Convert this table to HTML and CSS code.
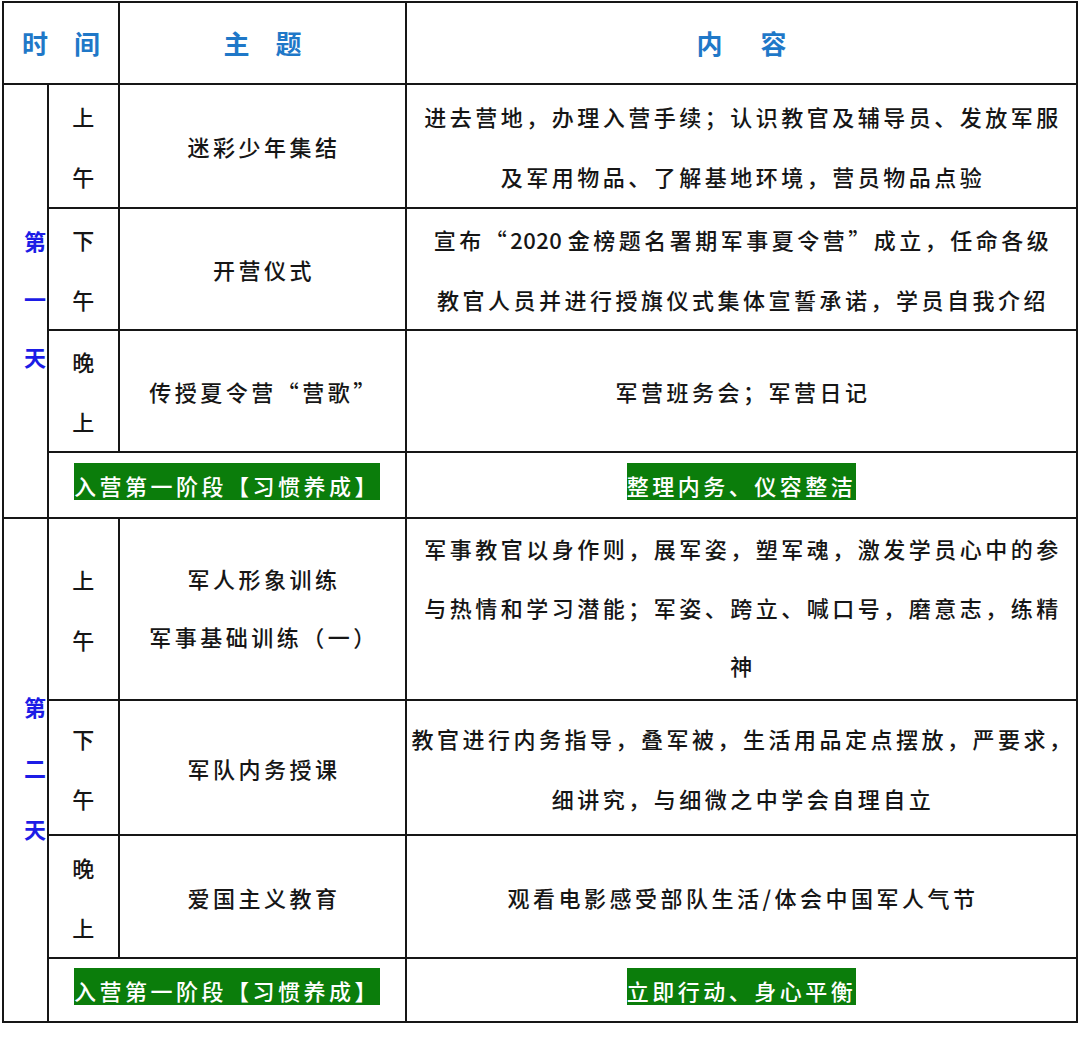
FILE: index.html
```html
<!DOCTYPE html>
<html lang="zh-CN">
<head>
<meta charset="utf-8">
<title>夏令营日程</title>
<link rel="stylesheet" href="styles.css">
</head>
<body>
<table class="schedule">
  <colgroup>
    <col class="c-day">
    <col class="c-time">
    <col class="c-theme">
    <col class="c-content">
  </colgroup>
  <tr class="r-head">
    <th colspan="2" class="head">时 间</th>
    <th class="head">主 题</th>
    <th class="head head-wide">内 容</th>
  </tr>
  <tr class="r-124">
    <td rowspan="4" class="day">第<br>一<br>天</td>
    <td class="time">上<br>午</td>
    <td>迷彩少年集结</td>
    <td>进去营地，办理入营手续；认识教官及辅导员、发放军服<br>及军用物品、了解基地环境，营员物品点验</td>
  </tr>
  <tr class="r-122">
    <td class="time">下<br>午</td>
    <td>开营仪式</td>
    <td>宣布“<span class="num">2020 </span>金榜题名署期军事夏令营”成立，任命各级<br>教官人员并进行授旗仪式集体宣誓承诺，学员自我介绍</td>
  </tr>
  <tr class="r-122">
    <td class="time">晚<br>上</td>
    <td>传授夏令营“营歌”</td>
    <td>军营班务会；军营日记</td>
  </tr>
  <tr class="r-66">
    <td colspan="2" class="stage"><span class="tag">入营第一阶段【习惯养成】</span></td>
    <td class="stage"><span class="tag">整理内务、仪容整洁</span></td>
  </tr>
  <tr class="r-182">
    <td rowspan="4" class="day day-two">第<br>二<br>天</td>
    <td class="time">上<br>午</td>
    <td class="tight">军人形象训练<br>军事基础训练（一）</td>
    <td class="tight">军事教官以身作则，展军姿，塑军魂，激发学员心中的参<br>与热情和学习潜能；军姿、跨立、喊口号，磨意志，练精<br>神</td>
  </tr>
  <tr class="r-135">
    <td class="time">下<br>午</td>
    <td>军队内务授课</td>
    <td>教官进行内务指导，叠军被，生活用品定点摆放，严要求，<br>细讲究，与细微之中学会自理自立</td>
  </tr>
  <tr class="r-123">
    <td class="time">晚<br>上</td>
    <td>爱国主义教育</td>
    <td>观看电影感受部队生活/体会中国军人气节</td>
  </tr>
  <tr class="r-64">
    <td colspan="2" class="stage"><span class="tag">入营第一阶段【习惯养成】</span></td>
    <td class="stage"><span class="tag">立即行动、身心平衡</span></td>
  </tr>
</table>
</body>
</html>
```
FILE: styles.css
```css
body {
  margin: 0;
  background: #ffffff;
  color: #161616;
  font-family: "Noto Sans CJK SC", "Noto Sans", sans-serif;
}

.schedule {
  border-collapse: collapse;
  table-layout: fixed;
  width: 1074px;
  margin: 1px 0 0 2px;
}

.c-day { width: 45px; }
.c-time { width: 71px; }
.c-theme { width: 287px; }
.c-content { width: 671px; }

.schedule th,
.schedule td {
  border: 2px solid #161616;
  padding: 0 0 0 3px;
  text-align: center;
  vertical-align: middle;
  font-size: 22px;
  line-height: 60px;
  letter-spacing: 3.5px;
  font-weight: 500;
  white-space: nowrap;
}

.num {
  letter-spacing: 0.5px;
}

.schedule .head {
  font-size: 26px;
  font-weight: bold;
  color: #1f78c8;
  letter-spacing: 0;
  word-spacing: 20px;
  padding: 0;
}

.schedule .head-wide {
  word-spacing: 32px;
}

.schedule .day {
  color: #1c1ce6;
  font-weight: bold;
  line-height: 58px;
  letter-spacing: 0;
  text-align: right;
  padding: 0 1px 6px 0;
}

.schedule .day-two {
  line-height: 61px;
}

.schedule .tight {
  line-height: 58.5px;
  padding-bottom: 4px;
}

.schedule .stage {
  padding: 0 0 7px 0;
  line-height: 37px;
}

.tag {
  display: inline-block;
  background: #0b7d0b;
  color: #ffffff;
  line-height: 30px;
  padding-top: 7px;
  vertical-align: top;
}

.r-head { height: 82px; }
.r-124 { height: 124px; }
.r-122 { height: 122px; }
.r-66 { height: 66px; }
.r-182 { height: 182px; }
.r-135 { height: 135px; }
.r-123 { height: 123px; }
.r-64 { height: 64px; }
```
